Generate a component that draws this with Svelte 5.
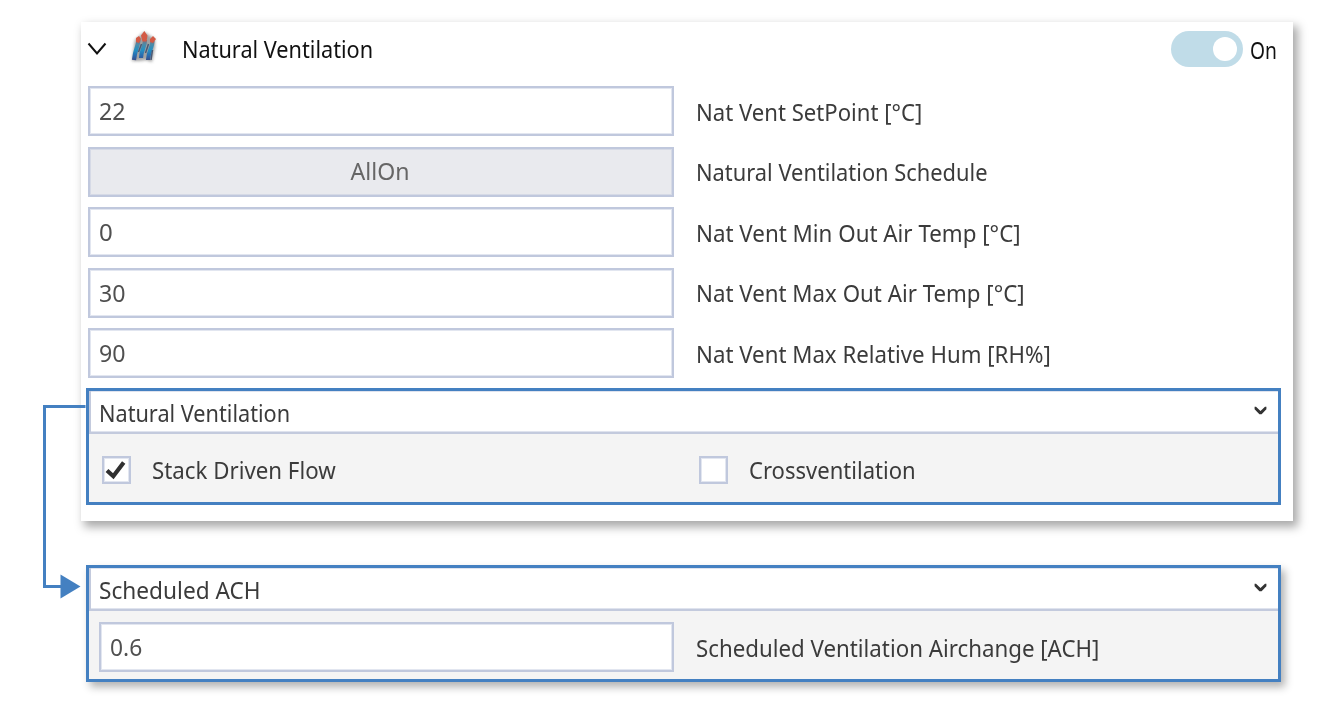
<script>
  const rows = [
    { value: '22', label: 'Nat Vent SetPoint [°C]', width: 226 },
    { value: 'AllOn', label: 'Natural Ventilation Schedule', button: true, width: 292 },
    { value: '0', label: 'Nat Vent Min Out Air Temp [°C]', width: 325 },
    { value: '30', label: 'Nat Vent Max Out Air Temp [°C]', width: 329 },
    { value: '90', label: 'Nat Vent Max Relative Hum [RH%]', width: 355 }
  ];

  // Condenses a line of text horizontally to the given advance width.
  function fit(node, width) {
    node.style.transform = `scaleX(${width / node.offsetWidth})`;
  }
</script>

{#snippet text(content, width)}
  <span class="text" use:fit={width}>{content}</span>
{/snippet}

{#snippet caret()}
  <svg class="caret" width="13" height="10" viewBox="0 0 13 10"><path d="M.6 .8L2 .8L6.500 5L11 .8L12.400 .8V3.300L7.600 8.300H5.400L.6 3.300z" /></svg>
{/snippet}

<main>
  <section class="card">
    <header>
      <svg class="chevron" width="20" height="14" viewBox="0 0 20 14"><path d="M1.500 1.500L10 11.500L18.500 1.500" /></svg>
      <svg class="logo" width="36" height="40" viewBox="0 0 36 40">
        <defs>
          <linearGradient id="stream" gradientUnits="userSpaceOnUse" x1="0" y1="12" x2="0" y2="34">
            <stop offset="0" stop-color="#8a6670" />
            <stop offset=".25" stop-color="#4d8ba8" />
            <stop offset=".5" stop-color="#2390c4" />
            <stop offset=".78" stop-color="#2a67ac" />
            <stop offset="1" stop-color="#3b4880" />
          </linearGradient>
          <filter id="soft" x="-30%" y="-30%" width="160%" height="160%"><feGaussianBlur stdDeviation=".6" /></filter>
          <filter id="haze" x="-30%" y="-30%" width="160%" height="160%"><feGaussianBlur stdDeviation="1.400" /></filter>
        </defs>
        <path d="M6 34L9 13L18 5L29 12L29 20L26 35L20 33L13 34Z" fill="#444" opacity=".5" filter="url(#haze)" />
        <g filter="url(#soft)">
          <g fill="none" stroke="url(#stream)" stroke-width="4.200">
            <path d="M12.500 13C12 20 9 22 8 33" />
            <path d="M19 13C19 20 15.500 22 15 31" />
            <path d="M26.500 14C26.500 20 22.500 24 22 33" />
          </g>
          <path d="M15.500 17L12.500 25M22.500 17L19.500 26M26.500 23L25 33" stroke="#4a5873" stroke-width="1.500" />
          <path d="M18.300 4L21.500 8.500L20.500 14.500L16.500 14.500L15 8.500zM10 11l3-2 2 3-2 4-3-1zM24 12l3-3 3 3-3 4-3-1z" fill="#d35a44" />
        </g>
      </svg>
      <h1>{@render text('Natural Ventilation', 191)}</h1>
      <div class="switch"><i></i></div>
      <div class="state">{@render text('On', 27)}</div>
    </header>

    <div class="rows">
      {#each rows as row}
        <div class="row">
          <div class="field" class:button={row.button}>
            {@render text(row.value, row.button ? 59 : row.value.length * 13.300)}
          </div>
          <label>{@render text(row.label, row.width)}</label>
        </div>
      {/each}
    </div>

    <div class="group">
      <div class="select">{@render text('Natural Ventilation', 191)}{@render caret()}</div>
      <div class="checks">
        <div class="check">
          <span class="box"><svg width="22" height="20" viewBox="0 0 22 20"><path d="M2 10.500L8.300 16.200L18.700 2.500" /></svg></span>
          {@render text('Stack Driven Flow', 184)}
        </div>
        <div class="check">
          <span class="box"></span>
          {@render text('Crossventilation', 167)}
        </div>
      </div>
    </div>
  </section>

  <section class="group detached">
    <div class="select">{@render text('Scheduled ACH', 162)}{@render caret()}</div>
    <div class="body">
      <div class="field">{@render text('0.6', 32)}</div>
      <label>{@render text('Scheduled Ventilation Airchange [ACH]', 403)}</label>
    </div>
  </section>

  <svg class="connector" width="44" height="200" viewBox="0 0 44 200">
    <path d="M43.500 6.500H2.500V186.500H20" />
    <polygon points="18.500,174.500 38.500,186.500 18.500,198.500" />
  </svg>
</main>

<style>
  :global(body) { background: #fff; }
  main {
    position: relative;
    box-sizing: border-box;
    width: 1339px;
    height: 710px;
    padding: 22px 0 0 81px;
    overflow: hidden;
    font: 23.500px/32px "Noto Sans", "Open Sans", sans-serif;
    color: #3b3b3b;
  }
  .card {
    box-sizing: border-box;
    width: 1212px;
    height: 499px;
    padding-left: 4.500px;
    background: #fff;
    box-shadow: 4px 5px 9px 1px rgba(0, 0, 0, .34);
  }
  .text {
    display: inline-block;
    white-space: pre;
    transform-origin: 0 50%;
  }
  header {
    display: flex;
    align-items: center;
    height: 54px;
    margin-bottom: 10px;
    color: #111;
  }
  .chevron { margin: 0 0 0 1px; }
  .chevron path { fill: none; stroke: #111; stroke-width: 2; }
  .logo { margin: -5px 0 0 19px; }
  h1 { margin: 0 0 0 20.500px; font: inherit; flex: 1; }
  .switch {
    box-sizing: border-box;
    display: flex;
    justify-content: flex-end;
    width: 72px;
    height: 36px;
    padding: 6px;
    border-radius: 18px;
    background: #c0dce8;
  }
  .switch i { width: 24px; height: 24px; border-radius: 50%; background: #fff; }
  .state { width: 43.500px; margin: 1px 0 0 6.500px; }
  .rows { display: grid; gap: 10.600px; margin-bottom: 10px; padding-left: 2.500px; }
  .row { display: flex; height: 50px; }
  .field {
    box-sizing: border-box;
    display: flex;
    align-items: center;
    width: 586px;
    height: 50px;
    padding: 0 0 0 8.500px;
    border: 2px solid #c0c8dd;
    box-shadow: inset 0 0 0 1px #e2e6f0;
    background: #fff;
    color: #505050;
  }
  .button { justify-content: center; padding: 0 2px 2px 0; background: #e9eaee; box-shadow: inset 0 0 0 1px #d6dae6; color: #666; }
  .button .text { transform-origin: 50% 50%; }
  label { display: flex; align-items: center; margin-left: 22px; padding-top: 1px; }
  .group {
    box-sizing: border-box;
    width: 1195.500px;
    height: 117px;
    border: 3px solid #4480c1;
    background: #f4f4f4;
  }
  .select {
    box-sizing: border-box;
    display: flex;
    align-items: center;
    justify-content: space-between;
    height: 43px;
    padding: 3px 10px 0 8px;
    border-bottom: 2px solid #c3cadd;
    border-left: 2px solid #c3cadd;
    box-shadow: inset 0 -1px #dfe3ee, inset 0 1px #dfe3ee;
    background: #fff;
  }
  .caret { margin: -5px 1px 0 0; }
  .caret path { fill: #333; }
  .checks { display: flex; padding: 19px 0 0 13px; }
  .check { display: flex; flex: none; align-items: center; width: 597px; height: 34px; }
  .box {
    box-sizing: border-box;
    display: flex;
    flex: none;
    align-items: center;
    justify-content: center;
    width: 29px;
    height: 28px;
    margin-right: 21px;
    border: 2px solid #c0c8dd;
    box-shadow: inset 0 0 0 1px #e2e6f0;
    background: #fff;
  }
  .box path { fill: none; stroke: #303030; stroke-width: 4.200; }
  .detached { margin: 44px 0 0 4.500px; box-shadow: 4px 5px 8px rgba(0, 0, 0, .3); }
  .body { display: flex; padding: 11px 0 0 10.500px; }
  .body .field { width: 575px; }
  .connector { position: absolute; left: 42px; top: 400px; }
  .connector path { fill: none; stroke: #4480c1; stroke-width: 3; }
  .connector polygon { fill: #4480c1; }
</style>
